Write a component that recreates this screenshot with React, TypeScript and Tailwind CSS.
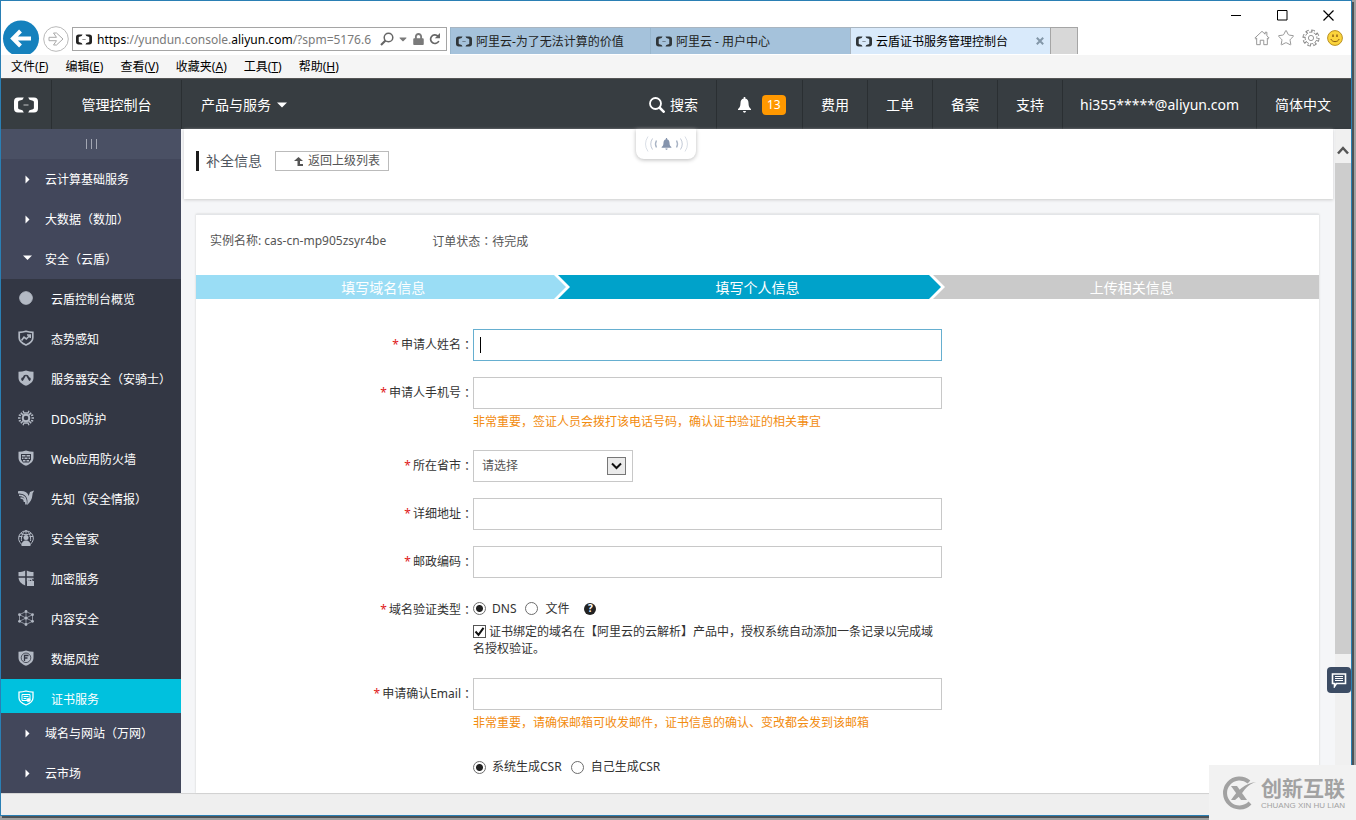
import type { ReactNode } from 'react'
import { Star } from 'lucide-react'
import { FaCaretDown, FaLock } from 'react-icons/fa'

const menus = [
  ['文件', 'F'],
  ['编辑', 'E'],
  ['查看', 'V'],
  ['收藏夹', 'A'],
  ['工具', 'T'],
  ['帮助', 'H'],
]

function AliyunLogo({ className }: { className: string }) {
  return (
    <svg viewBox="0 4 24 16" className={className} fill="currentColor" aria-hidden="true">
      <path d="M4 4.500h5.800L8.500 6.800l-3.400.9A1.400 1.400 0 0 0 4.100 9v6a1.400 1.400 0 0 0 1 1.300l3.400.9 1.300 2.300H4a4 4 0 0 1-4-4v-7a4 4 0 0 1 4-4zM20 4.500h-5.800l1.300 2.300 3.400.9a1.400 1.400 0 0 1 1 1.300v6a1.400 1.400 0 0 1-1 1.300l-3.400.9-1.300 2.300H20a4 4 0 0 0 4-4v-7a4 4 0 0 0-4-4z" />
      <path d="M9.500 11.500h5v1h-5z" opacity=".7" />
    </svg>
  )
}

function TitleBar() {
  return (
    <div className="flex h-[26px] items-end justify-end gap-[35px] pr-[17px] pb-[6px] text-black">
      <button type="button" aria-label="最小化">
        <svg width="11" height="11" viewBox="0 0 11 11" className="block">
          <path d="M0 5.500h10" stroke="currentColor" />
        </svg>
      </button>
      <button type="button" aria-label="最大化">
        <svg width="11" height="11" viewBox="0 0 11 11" className="block">
          <path d="M.5.500h9.500v9.500H.5z" stroke="currentColor" fill="none" />
        </svg>
      </button>
      <button type="button" aria-label="关闭">
        <svg width="11" height="11" viewBox="0 0 11 11" className="block">
          <path d="M.5.500l10 10M10.500.500l-10 10" stroke="currentColor" strokeWidth="1.200" />
        </svg>
      </button>
    </div>
  )
}

function BrowserTab({ title, active }: { title: string; active?: boolean }) {
  return (
    <div
      className={
        active
          ? 'flex w-[200px] items-center gap-1 border-t border-l border-[#a9b5c0] bg-[#d9eafb] pl-[5px] text-black'
          : 'flex w-[200px] items-center gap-1 border-t border-l border-[#a9b5c0] border-l-[#98b6cd] bg-[#a5c2db] pl-[5px] text-[#222]'
      }
    >
      <AliyunLogo className="h-[11px] w-4 text-[#30363a]" />
      <span className="flex-1 truncate pt-[2px] text-xs">{title}</span>
      {active && (
        <button type="button" aria-label="关闭标签页" className="mr-[6px]">
          <svg width="8" height="8" viewBox="0 0 8 8" className="block">
            <path d="M.8.800l6.400 6.400M7.200.800L.8 7.200" stroke="#8397a8" strokeWidth="2" />
          </svg>
        </button>
      )}
    </div>
  )
}

function GearIcon() {
  return (
    <svg width="18" height="18" viewBox="0 0 18 18" fill="none" stroke="currentColor" className="block">
      <circle cx="9" cy="9" r="7" strokeWidth="3.200" strokeDasharray="3.300 2.198" />
      <circle cx="9" cy="9" r="5.900" fill="#fff" strokeWidth=".9" />
      <circle
        cx="9"
        cy="9"
        r="6.300"
        stroke="#fff"
        strokeWidth="2.600"
        strokeDasharray="1.500 3.448"
        strokeDashoffset="-.73"
      />
      <circle cx="9" cy="9" r="2.600" strokeWidth=".9" />
    </svg>
  )
}

function BrowserBar() {
  return (
    <div className="flex h-[28px] items-start">
      <button type="button" aria-label="后退" className="ml-px h-[27px] w-[38px]">
        <svg viewBox="0 0 38 34" className="-mt-[7px] block h-[34px] w-[38px]">
          <circle cx="19" cy="18.500" r="18" fill="#1581bd" />
          <path d="M29 18.500H12M18.500 11l-7.500 7.500 7.500 7.500" stroke="#fff" strokeWidth="4" fill="none" />
        </svg>
      </button>
      <button type="button" aria-label="前进" className="ml-[3px]">
        <svg width="26" height="26" viewBox="0 0 26 26" className="-mt-px block">
          <circle cx="13" cy="13" r="12.300" fill="#fff" stroke="#b9b9b9" />
          <path
            d="M6 11.300h7.500L10.500 7h3l6.500 6-6.500 6h-3l3-4.300H6z"
            stroke="#a9a9a9"
            fill="#fff"
          />
        </svg>
      </button>
      <div className="ml-[3px] flex h-[24px] w-[375px] shrink-0 items-center border border-[#a5a5a5] bg-white pl-[3px] text-[#7a7a7a]">
        <AliyunLogo className="h-[11px] w-4 text-[#222]" />
        <p className="mr-[3px] ml-[5px] flex-1 pt-[2px] text-xs whitespace-nowrap">
          <span className="text-black">https</span>://yundun.console.
          <span className="text-black">aliyun.com</span>/?spm=5176.6
        </p>
        <button type="button" aria-label="搜索地址">
          <svg width="14" height="14" viewBox="0 0 14 14" className="block">
            <circle cx="8.500" cy="5.500" r="4.300" fill="none" stroke="#666" strokeWidth="1.500" />
            <path d="M5.500 8.500L1 13" stroke="#666" strokeWidth="2.200" />
          </svg>
        </button>
        <FaCaretDown className="ml-[3px] size-3" />
        <FaLock className="ml-[4px] h-3 w-[11px]" />
        <button type="button" aria-label="刷新" className="mr-[5px] ml-[5px]">
          <svg width="12" height="12" viewBox="0 0 12 12" className="block">
            <path d="M9.800 8A4.300 4.300 0 1 1 9 3.200" fill="none" stroke="#666" strokeWidth="1.700" />
            <path d="M11 0v5.200H5.800z" fill="#666" />
          </svg>
        </button>
      </div>
      <div className="ml-[3px] flex h-[27px] min-w-0">
        <BrowserTab title="阿里云-为了无法计算的价值" />
        <BrowserTab title="阿里云 - 用户中心" />
        <BrowserTab title="云盾证书服务管理控制台" active />
        <button
          type="button"
          aria-label="新建标签页"
          className="w-[28px] border border-b-0 border-[#a5a5a5] bg-[#d8d8d8]"
        />
      </div>
      <div className="mt-[2px] mr-[8px] ml-auto flex items-center gap-[7px] text-[#8b8b8b]">
        <button type="button" aria-label="主页">
          <svg width="16" height="16" viewBox="0 0 18 17" fill="none" stroke="currentColor" className="block">
            <path d="M1 8.500L9 1l3.500 3.200V2h2v4L17 8.500l-1 1-1-.9V16h-4v-5H7v5H3V8.600l-1 .9z" />
          </svg>
        </button>
        <button type="button" aria-label="收藏夹">
          <Star className="block size-[18px]" strokeWidth={1.2} />
        </button>
        <button type="button" aria-label="设置">
          <GearIcon />
        </button>
        <button type="button" aria-label="反馈">
          <svg width="16" height="16" viewBox="0 0 16 16" className="block">
            <circle cx="8" cy="8" r="7.400" fill="#fbd43c" stroke="#b99124" />
            <path d="M6 4.500v2.500M10 4.500v2.500" stroke="#8a5a10" strokeWidth="1.400" />
            <path d="M3.800 9c1.500 3.500 7 3.500 8.400 0" fill="none" stroke="#8a5a10" />
          </svg>
        </button>
      </div>
    </div>
  )
}

function MenuBar() {
  return (
    <div className="flex h-[23px] items-center gap-[17px] bg-[#f5f5f5] pt-px pl-[10px] text-xs text-black">
      {menus.map(([name, key]) => (
        <button type="button" key={key}>
          {name}(<span className="underline">{key}</span>)
        </button>
      ))}
    </div>
  )
}

function NavItem({ children, className = 'px-[18px]' }: { children: ReactNode; className?: string }) {
  return (
    <a href="#" className={`flex items-center border-l border-[#2a2f32] ${className}`}>
      {children}
    </a>
  )
}

function TopNav() {
  return (
    <nav className="flex h-[51px] border-t border-[#555] bg-[#373d41] pt-px text-sm whitespace-nowrap text-white">
      <a href="#" aria-label="阿里云" className="flex w-[50px] items-center justify-center">
        <AliyunLogo className="h-4 w-6" />
      </a>
      <NavItem className="w-[130px] justify-center">管理控制台</NavItem>
      <button type="button" className="flex items-center gap-[6px] border-l border-[#2a2f32] px-[19px]">
        产品与服务
        <svg width="10" height="6" viewBox="0 0 10 6">
          <path d="M0 .500h10L5 5.500z" fill="currentColor" />
        </svg>
      </button>
      <button type="button" className="ml-auto flex items-center gap-[5px] px-[18px]">
        <svg width="16" height="16" viewBox="0 0 16 16" fill="none" stroke="currentColor">
          <circle cx="6.500" cy="6.500" r="5.500" strokeWidth="1.800" />
          <path d="M10.500 10.500l5 5" strokeWidth="2.500" />
        </svg>
        搜索
      </button>
      <NavItem className="w-[86px] gap-[11px] pl-[21px]">
        <Bell className="h-4 w-[13px]" />
        <span className="rounded bg-[#ff9800] px-[5px] text-xs leading-5">13</span>
      </NavItem>
      <NavItem>费用</NavItem>
      <NavItem>工单</NavItem>
      <NavItem>备案</NavItem>
      <NavItem>支持</NavItem>
      <NavItem className="px-[17px]">hi355*****@aliyun.com</NavItem>
      <NavItem className="pr-5 pl-[18px]">简体中文</NavItem>
    </nav>
  )
}

function Bell({ className }: { className: string }) {
  return (
    <svg viewBox="0 0 13 16" className={className} fill="currentColor" aria-hidden="true">
      <path d="M5.700 0h1.600v1.500C9.500 2 10.400 3.600 10.500 6c.1 3.600.8 4.700 2.500 6v1H0v-1c1.700-1.300 2.400-2.400 2.500-6 .1-2.400 1-4 3.200-4.500zM5 14h3c-.2 2.300-2.800 2.300-3 0z" />
    </svg>
  )
}

const shield = 'M8 .500c2.500.9 5 1.300 7.500 1.300v6c0 4-3.500 6.500-7.500 8-4-1.500-7.500-4-7.500-8v-6C3 1.800 5.500 1.400 8 .500z'

const subItems: { label: string; icon: ReactNode }[] = [
  { label: '云盾控制台概览', icon: <circle cx="8" cy="8" r="6.300" fill="currentColor" /> },
  {
    label: '态势感知',
    icon: (
      <>
        <path d="M8 1.200c2.300.8 4.500 1.100 6.800 1.100v5.500c0 3.500-3 5.700-6.800 7.200-3.800-1.500-6.800-3.700-6.800-7.200V2.300c2.300 0 4.500-.3 6.800-1.100z" strokeWidth="1.700" />
        <path d="M3.500 10.500l2.500-3.300 2.300 1.800L12 5.200M9 5h3.200v3" strokeWidth="1.600" />
      </>
    ),
  },
  {
    label: '服务器安全（安骑士）',
    icon: (
      <>
        <path d={shield} fill="currentColor" stroke="none" />
        <path d="M4.800 11C2.500 10.500 2.700 7.500 5 7.300 5.300 4 10.700 4 11 7.300c2.300.2 2.500 3.200.2 3.700L8 5.500z" fill="#333744" stroke="none" />
      </>
    ),
  },
  {
    label: 'DDoS防护',
    icon: (
      <>
        <circle cx="8" cy="8" r="3.300" strokeWidth="2" />
        <path
          d="M0 8h2.500M13.500 8H16M2.800 2.800l3 3M10.200 10.200l3 3M2.800 13.200l3-3M10.200 5.800l3-3"
          strokeWidth="1.600"
        />
        <path
          d="M5 .800l1 2.200h4l1-2.200M5 15.200L6 13h4l1 2.200M.8 5l2.200.5M.8 11l2.200-.5M15.200 5l-2.200.5M15.200 11l-2.200-.5"
          strokeWidth="1.300"
        />
      </>
    ),
  },
  {
    label: 'Web应用防火墙',
    icon: (
      <>
        <path d={shield} fill="currentColor" stroke="none" />
        <path d="M3 4h10v5.500l-2 3H5l-2-3z" fill="#333744" stroke="none" />
        <path d="M4 5h3.500v1.600H4zM8.500 5H12v1.600H8.500zM4 7.500h1.500v1.600H4zM6.500 7.500h3v1.600h-3zM10.500 7.500H12v1.600h-1.500zM5 10h2.500v1.600H5zM8.500 10H11v1.600H8.500z" fill="currentColor" stroke="none" />
      </>
    ),
  },
  {
    label: '先知（安全情报）',
    icon: (
      <>
        <path d="M0 1.300c6-1 9.500.7 10.700 4.700L12 2l4-1.500c-.5 2-1.500 2-1.500 4-.3 5-2.500 8-5.500 10.500C11 7.500 7 3.200 0 3.500z" fill="currentColor" stroke="none" />
        <path d="M1 5.200c5 0 7.500 2.500 7 9.300M2.500 8c3 0 4 1.500 4 4" strokeWidth="1.600" />
      </>
    ),
  },
  {
    label: '安全管家',
    icon: (
      <>
        <path d="M4 14.500a7.400 7.400 0 1 1 8 0M1 6.500h3.500M11.500 6.500H15M3 3.500c3 1.500 7 1.500 10 0M8 .500v3M3.500 11c-.5-4 .5-8 4.500-10.500 4 2.500 5 6.500 4.500 10.500" strokeWidth="1" />
        <circle cx="8" cy="7.500" r="2.500" fill="currentColor" stroke="none" />
        <path d="M3.500 16c0-4 2-5.500 4.500-5.500s4.500 1.500 4.500 5.500z" fill="currentColor" stroke="none" />
      </>
    ),
  },
  {
    label: '加密服务',
    icon: (
      <g fill="currentColor" stroke="none">
        <path d="M7.200.500v5.800H.5V2c2.500 0 4.500-.5 6.700-1.500zM8.800.500v5.800h6.700V2c-2.500 0-4.500-.5-6.700-1.500zM.5 7.800h6.700v7.700C3.500 14 .8 11.500.5 7.800zM8.800 7.800h6.700v1.700l-1-.7h-2.800l-1.200 1.400v1H8.800z" />
        <path d="M9 11h1.500v-.8c0-2.400 4-2.400 4 0v.8h1.500v5H9zM11.700 11h1.600v-.7c0-.8-1.600-.8-1.600 0z" fillRule="evenodd" />
      </g>
    ),
  },
  {
    label: '内容安全',
    icon: (
      <>
        <path d="M8 1.500l6.500 3.200v6.600L8 14.500l-6.500-3.200V4.700zM1.500 4.700l13 6.600M14.500 4.700l-13 6.600M8 1.500v13" strokeWidth=".7" />
        <g fill="currentColor" stroke="none">
          <circle cx="8" cy="1.500" r="1.400" />
          <circle cx="8" cy="8" r="1.600" />
          <circle cx="8" cy="14.500" r="1.400" />
          <circle cx="1.500" cy="4.700" r="1.400" />
          <circle cx="14.500" cy="4.700" r="1.400" />
          <circle cx="1.500" cy="11.300" r="1.400" />
          <circle cx="14.500" cy="11.300" r="1.400" />
        </g>
      </>
    ),
  },
  {
    label: '数据风控',
    icon: (
      <>
        <path d={shield} fill="currentColor" stroke="none" />
        <circle cx="8" cy="7.800" r="4.800" stroke="#333744" strokeWidth=".8" />
        <path d="M6.500 11V5.500h4M6.500 8h3" stroke="#333744" strokeWidth="1.300" />
      </>
    ),
  },
]

function SideGroup({ label, open }: { label: string; open?: boolean }) {
  return (
    <a href="#" className="flex h-10 items-center pl-[22px]">
      <svg width="10" height="10" viewBox="0 0 10 10" fill="currentColor" className="mr-3">
        {open ? <path d="M0 1.500h9L4.500 6z" /> : <path d="M2.500 1.500l4 4-4 4z" />}
      </svg>
      <span className="pt-[2px]">{label}</span>
    </a>
  )
}

function Sidebar() {
  return (
    <aside className="w-[180px] shrink-0 bg-[#42475b] text-xs text-white">
      <button
        type="button"
        aria-label="收起菜单"
        className="flex h-[30px] w-full items-center justify-center gap-1 bg-[#4a5064]"
      >
        <i className="h-[10px] w-px bg-[#a3a7b3]" />
        <i className="h-[10px] w-px bg-[#a3a7b3]" />
        <i className="h-[10px] w-px bg-[#a3a7b3]" />
      </button>
      <SideGroup label="云计算基础服务" />
      <SideGroup label="大数据（数加）" />
      <SideGroup label="安全（云盾）" open />
      <div className="bg-[#333744]">
        {subItems.map((item) => (
          <a href="#" key={item.label} className="flex h-10 items-center gap-[17px] pl-[17px] whitespace-nowrap">
            <svg viewBox="0 0 16 16" fill="none" stroke="currentColor" className="mb-[2px] size-4 text-[#b3b9c4]">
              {item.icon}
            </svg>
            <span className="pt-[2px]">{item.label}</span>
          </a>
        ))}
        <a href="#" className="flex h-[34px] items-center gap-[17px] bg-[#00c1de] pt-[6px] pl-[17px]">
          <svg viewBox="0 0 16 16" fill="none" stroke="currentColor" className="mb-[2px] size-4">
            <path d="M8 1c2.300.8 4.500 1.100 7 1.100v5.700c0 3.500-3 5.700-7 7.200-4-1.500-7-3.700-7-7.200V2.100c2.500 0 4.700-.3 7-1.100z" strokeWidth="1.300" />
            <path d="M4 4.500h8v6H4zM5.500 6.500h5M5.500 8.500h3" />
            <circle cx="10.500" cy="10" r="1.600" fill="currentColor" />
          </svg>
          <span className="pt-[2px]">证书服务</span>
        </a>
      </div>
      <SideGroup label="域名与网站（万网）" />
      <SideGroup label="云市场" />
    </aside>
  )
}

function StepArrow({ className, next }: { className: string; next: string }) {
  return (
    <svg viewBox="0 0 16 24" className={`h-6 w-4 shrink-0 ${className}`} aria-hidden="true">
      <path d="M0 0h16v24H0z" fill={next} />
      <path d="M0 0h4l12 12L4 24H0z" fill="#fff" />
      <path d="M0 0l12 12L0 24z" fill="currentColor" />
    </svg>
  )
}

function Steps() {
  return (
    <ol className="flex h-6 text-sm leading-[26px] text-white">
      <li className="flex flex-1 bg-[#9addf5]">
        <span className="flex-1 pl-4 text-center">填写域名信息</span>
        <StepArrow className="text-[#9addf5]" next="#00a2ca" />
      </li>
      <li className="flex flex-1 bg-[#00a2ca]">
        <span className="flex-1 pl-4 text-center">填写个人信息</span>
        <StepArrow className="text-[#00a2ca]" next="#cacaca" />
      </li>
      <li className="flex-1 bg-[#cacaca] text-center">上传相关信息</li>
    </ol>
  )
}

const inputClass = 'block h-8 w-full border border-[#c8c8c8] bg-white px-2 text-xs outline-none'
const radioClass =
  'size-[13px] shrink-0 appearance-none rounded-full border border-[#6d6d6d] bg-white checked:bg-[radial-gradient(circle,#222_3px,#fff_4px)]'

function FieldLabel({ children }: { children: ReactNode }) {
  return (
    <>
      <span className="mr-[2px] text-[#e02020]">*</span>
      <span>{children}</span>
      <span className="font-['Noto_Sans_CJK_TC',sans-serif]">：</span>
    </>
  )
}

function Row({ label, htmlFor, children }: { label?: string; htmlFor?: string; children: ReactNode }) {
  return (
    <div className="flex">
      <div className="w-[277px] shrink-0 leading-8">
        {label && htmlFor && (
          <label htmlFor={htmlFor} className="flex h-8 justify-end">
            <FieldLabel>{label}</FieldLabel>
          </label>
        )}
        {label && !htmlFor && (
          <div className="flex h-8 justify-end">
            <FieldLabel>{label}</FieldLabel>
          </div>
        )}
      </div>
      <div className="max-w-[469px] flex-1">{children}</div>
    </div>
  )
}

function Hint({ children }: { children: ReactNode }) {
  return <p className="leading-[25px] text-[#f28c0f]">{children}</p>
}

function CertForm() {
  return (
    <form className="flex flex-col gap-4 pt-[30px] pb-[10px] text-xs text-[#333]">
      <Row label="申请人姓名" htmlFor="name">
        <div className="relative">
          <input id="name" type="text" className="block h-8 w-full border border-[#66afd0] bg-white px-2 text-xs outline-none" />
          <i className="absolute top-2 left-[7px] h-4 w-px bg-black" />
        </div>
      </Row>
      <Row label="申请人手机号" htmlFor="phone">
        <input id="phone" type="tel" className={inputClass} />
        <Hint>非常重要，签证人员会拨打该电话号码，确认证书验证的相关事宜</Hint>
      </Row>
      <Row label="所在省市" htmlFor="province">
        <div className="relative w-[160px]">
          <select
            id="province"
            className="block h-8 w-full appearance-none border border-[#c8c8c8] bg-white pl-2 text-xs text-[#555]"
          >
            <option>请选择</option>
          </select>
          <span className="pointer-events-none absolute top-[7px] right-[7px] flex h-[18px] w-[19px] items-center justify-center border border-[#777] bg-[#ebebeb]">
            <svg width="11" height="8" viewBox="0 0 11 8">
              <path d="M1 1.500l4.500 4.500L10 1.500" fill="none" stroke="#111" strokeWidth="2" />
            </svg>
          </span>
        </div>
      </Row>
      <Row label="详细地址" htmlFor="address">
        <input id="address" type="text" className={inputClass} />
      </Row>
      <Row label="邮政编码" htmlFor="zip">
        <input id="zip" type="text" className={inputClass} />
      </Row>
      <Row label="域名验证类型">
        <div className="flex h-[29px] items-center">
          <input id="dns" type="radio" name="verify" defaultChecked className={radioClass} />
          <label htmlFor="dns" className="ml-[6px]">DNS</label>
          <input id="file" type="radio" name="verify" className={`ml-[9px] ${radioClass}`} />
          <label htmlFor="file" className="ml-[7px]">文件</label>
          <span className="ml-[15px] flex size-[12px] items-center justify-center rounded-full bg-[#222] text-[10px] font-bold text-white">
            ?
          </span>
        </div>
        <div className="pb-[5px] leading-[17px]">
          <span className="relative mr-[3px] inline-block size-[13px] align-[-2px]">
            <input
              id="auth"
              type="checkbox"
              defaultChecked
              className="peer block size-[13px] appearance-none border border-[#555] bg-white"
            />
            <svg
              viewBox="0 0 13 13"
              className="pointer-events-none absolute inset-0 hidden size-[13px] peer-checked:block"
            >
              <path d="M2.500 6.500l3 3.300 5-7" fill="none" stroke="#111" strokeWidth="2" />
            </svg>
          </span>
          <label htmlFor="auth">
            证书绑定的域名在【阿里云的云解析】产品中，授权系统自动添加一条记录以完成域名授权验证。
          </label>
        </div>
      </Row>
      <Row label="申请确认Email" htmlFor="email">
        <input id="email" type="email" className={inputClass} />
        <Hint>非常重要，请确保邮箱可收发邮件，证书信息的确认、变改都会发到该邮箱</Hint>
      </Row>
      <Row>
        <div className="flex h-8 items-center">
          <input id="csr-auto" type="radio" name="csr" defaultChecked className={radioClass} />
          <label htmlFor="csr-auto" className="ml-[6px]">系统生成CSR</label>
          <input id="csr-own" type="radio" name="csr" className={`ml-[9px] ${radioClass}`} />
          <label htmlFor="csr-own" className="ml-[7px]">自己生成CSR</label>
        </div>
      </Row>
    </form>
  )
}

function Content() {
  return (
    <main className="relative flex min-w-0 flex-1 flex-col bg-[#f5f6f8]">
      <header className="mr-[2px] ml-[3px] flex h-[70px] items-start bg-white pt-[22px] pl-3 shadow-[0_1px_3px_#ccc]">
        <h1 className="flex h-5 items-center border-l-[3px] border-[#1c1c1c] pl-[7px] text-sm text-[#50565e]">
          补全信息
        </h1>
        <a
          href="#"
          className="ml-[13px] flex h-5 items-center gap-1 border border-[#bbb] pr-2 pl-[18px] text-xs text-[#555]"
        >
          <svg width="10" height="9" viewBox="0 0 10 9" fill="currentColor">
            <path d="M4.500 0L9 4H6v3h3v2H3.500V4H0z" />
          </svg>
          返回上级列表
        </a>
      </header>
      <div className="absolute top-0 left-1/2 flex h-[30px] w-[60px] -translate-x-[122px] items-center justify-center gap-[3px] rounded-b-lg bg-white text-[#8594ad] shadow-[0_1px_4px_#bbb]">
        <svg width="14" height="20" viewBox="0 0 14 20" fill="none" stroke="currentColor">
          <path d="M12.500 6.500q-2 3.500 0 7" strokeWidth="1.400" opacity=".7" />
          <path d="M8.500 4.500q-3.500 5.500 0 11" opacity=".5" />
          <path d="M4 2.500q-5 7.500 0 15" opacity=".3" />
        </svg>
        <Bell className="h-3 w-[11px]" />
        <svg width="14" height="20" viewBox="0 0 14 20" fill="none" stroke="currentColor">
          <path d="M1.500 6.500q2 3.500 0 7" strokeWidth="1.400" opacity=".7" />
          <path d="M5.500 4.500q3.500 5.500 0 11" opacity=".5" />
          <path d="M10 2.500q5 7.500 0 15" opacity=".3" />
        </svg>
      </div>
      <section className="mt-[15px] mr-4 ml-[15px] flex-1 border-t border-[#e3e5e8] bg-white shadow-[0_0_2px_#ccc]">
        <div className="flex h-[60px] items-center gap-[46px] pb-[8px] pl-[14px] text-xs text-[#555]">
          <span>实例名称: cas-cn-mp905zsyr4be</span>
          <span>
            订单状态<span className="font-['Noto_Sans_CJK_TC',sans-serif]">：</span>待完成
          </span>
        </div>
        <Steps />
        <CertForm />
      </section>
    </main>
  )
}

function Scrollbar() {
  return (
    <div className="w-[16px] shrink-0 bg-[#f0f0f0]" aria-hidden="true">
      <div className="flex h-[34px] items-end justify-center pb-[8px]">
        <svg width="12" height="9" viewBox="0 0 12 9">
          <path d="M1 7.500l5-5.500 5 5.500" fill="none" stroke="#555" strokeWidth="2.500" />
        </svg>
      </div>
      <div className="h-[74%] bg-[#cdcdcd]" />
    </div>
  )
}

function ChatButton() {
  return (
    <button
      type="button"
      aria-label="在线咨询"
      className="absolute right-0 bottom-[100px] flex h-[26px] w-6 items-center justify-center rounded bg-[#3c4c64]"
    >
      <svg width="16" height="15" viewBox="0 0 16 15" fill="none" stroke="#fff">
        <path d="M1.500 1h13v9.500h-9L3.500 13.500v-3h-2z" strokeWidth="1.600" />
        <path d="M4 3.500h8M4 5.500h8M4 7.500h8" />
      </svg>
    </button>
  )
}

function Watermark() {
  return (
    <div className="absolute right-0 bottom-0 flex h-[55px] w-[147px] items-center gap-[5px] bg-[#f2f2f2] pl-3 text-[#a2a2a2]">
      <svg viewBox="0 0 35 34" className="h-[34px] w-[35px]" fill="none" stroke="currentColor" aria-hidden="true">
        <path d="M28 6A14.500 14.500 0 1 0 29 27" strokeWidth="4" />
        <path d="M10 10h6l10 14h-6z" fill="currentColor" stroke="none" />
        <path d="M35 6c-8 2-12 8-15 13l-6 5h-4c6-9 14-17 25-18z" fill="currentColor" stroke="none" />
      </svg>
      <div className="whitespace-nowrap">
        <p className="text-[21px] leading-[26px] font-bold">创新互联</p>
        <p className="font-['Liberation_Sans',sans-serif] text-[8px] leading-[10px]">CHUANG XIN HU LIAN</p>
      </div>
    </div>
  )
}

export default function App() {
  return (
    <div className="relative flex min-h-screen bg-[#a0a0a0] pr-[4px] pb-[4px] font-['Noto_Sans','Noto_Sans_CJK_SC',sans-serif]">
      <div className="flex min-w-0 flex-1 flex-col border border-[#2a7fb4] bg-white shadow-[2px_2px_0_#4c5256]">
        <TitleBar />
        <BrowserBar />
        <MenuBar />
        <TopNav />
        <div className="relative flex flex-1">
          <Sidebar />
          <Content />
          <Scrollbar />
          <ChatButton />
        </div>
        <footer className="h-[22px] border-t border-[#d5d5d5] bg-[#efefef]" />
      </div>
      <Watermark />
    </div>
  )
}
